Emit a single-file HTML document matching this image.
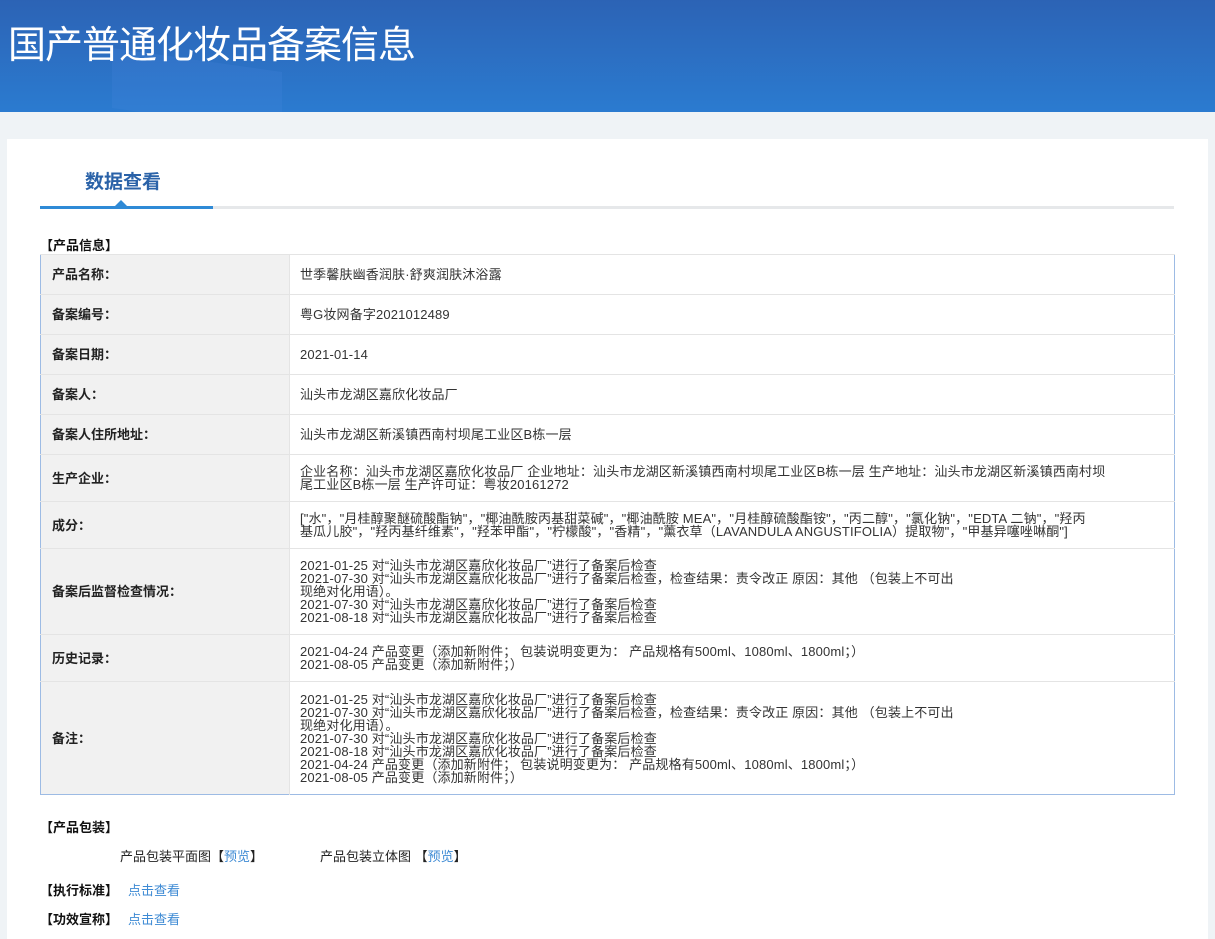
<!DOCTYPE html>
<html><head><meta charset="utf-8"><style>
*{margin:0;padding:0;box-sizing:border-box}
body{width:1215px;height:931px;overflow:hidden;background:#eff3f6;font-family:"Liberation Sans","Noto Sans CJK SC",sans-serif;color:#333;position:relative}
.hdr{position:absolute;left:0;top:0;width:1215px;height:112px;background:linear-gradient(180deg,#2c63b5 0%,#2b7bd0 100%);overflow:hidden}
.hdr .s1{position:absolute;left:112px;top:60px;width:170px;height:60px;background:rgba(80,140,230,.18);transform:skewY(8deg)}
.hdr h1{position:absolute;left:8px;top:14px;font-size:38px;font-weight:normal;color:#fff;letter-spacing:-1px;white-space:nowrap}
.panel{position:absolute;left:7px;top:139px;width:1201px;height:800px;background:#fff}
.tab{position:absolute;left:85px;top:167px;font-size:19px;font-weight:bold;color:#2a62a8}
.line{position:absolute;left:40px;top:206px;width:1134px;height:3px;background:#e6e8ea}
.line b{position:absolute;left:0;top:0;width:173px;height:3px;background:#2f8ad6}
.tri{position:absolute;left:115px;top:200px;width:0;height:0;border-left:6px solid transparent;border-right:6px solid transparent;border-bottom:6px solid #2f8ad6}
.sec{position:absolute;left:40px;font-size:13px;font-weight:bold;color:#111}
table{position:absolute;left:40px;top:254px;width:1135px;border-collapse:collapse;border:1px solid #9dbbe4;font-size:13px}
td{border-top:1px solid #e4e4e4;vertical-align:middle;line-height:13px;color:#333}
td.l{width:249px;background:#f1f1f1;font-weight:bold;padding-left:11px;color:#222;border-right:1px solid #e4e4e4}
td.v{padding-left:10px;padding-right:56px;letter-spacing:0.15px}
a{color:#3d8ad4;text-decoration:none}
.t{position:absolute;font-size:13px;color:#222}
</style></head><body>
<div class="hdr"><div class="s1"></div><h1>国产普通化妆品备案信息</h1></div>
<div class="panel"></div>
<div class="tab">数据查看</div>
<div class="line"><b></b></div>
<div class="tri"></div>
<div class="sec" style="top:235px">【产品信息】</div>
<table>
<tr style="height:40px"><td class="l">产品名称：</td><td class="v">世季馨肤幽香润肤·舒爽润肤沐浴露</td></tr>
<tr style="height:40px"><td class="l">备案编号：</td><td class="v">粤G妆网备字2021012489</td></tr>
<tr style="height:40px"><td class="l">备案日期：</td><td class="v">2021-01-14</td></tr>
<tr style="height:40px"><td class="l">备案人：</td><td class="v">汕头市龙湖区嘉欣化妆品厂</td></tr>
<tr style="height:40px"><td class="l">备案人住所地址：</td><td class="v">汕头市龙湖区新溪镇西南村坝尾工业区B栋一层</td></tr>
<tr style="height:47px"><td class="l">生产企业：</td><td class="v">企业名称：汕头市龙湖区嘉欣化妆品厂 企业地址：汕头市龙湖区新溪镇西南村坝尾工业区B栋一层 生产地址：汕头市龙湖区新溪镇西南村坝<br>尾工业区B栋一层 生产许可证：粤妆20161272</td></tr>
<tr style="height:47px"><td class="l">成分：</td><td class="v">["水"，"月桂醇聚醚硫酸酯钠"，"椰油酰胺丙基甜菜碱"，"椰油酰胺 MEA"，"月桂醇硫酸酯铵"，"丙二醇"，"氯化钠"，"EDTA 二钠"，"羟丙<br>基瓜儿胶"，"羟丙基纤维素"，"羟苯甲酯"，"柠檬酸"，"香精"，"薰衣草（LAVANDULA ANGUSTIFOLIA）提取物"，"甲基异噻唑啉酮"]</td></tr>
<tr style="height:86px"><td class="l">备案后监督检查情况：</td><td class="v">2021-01-25 对“汕头市龙湖区嘉欣化妆品厂”进行了备案后检查<br>2021-07-30 对“汕头市龙湖区嘉欣化妆品厂”进行了备案后检查，检查结果：责令改正 原因：其他 （包装上不可出<br>现绝对化用语）。<br>2021-07-30 对“汕头市龙湖区嘉欣化妆品厂”进行了备案后检查<br>2021-08-18 对“汕头市龙湖区嘉欣化妆品厂”进行了备案后检查</td></tr>
<tr style="height:47px"><td class="l">历史记录：</td><td class="v">2021-04-24 产品变更（添加新附件； 包装说明变更为： 产品规格有500ml、1080ml、1800ml；）<br>2021-08-05 产品变更（添加新附件；）</td></tr>
<tr style="height:113px"><td class="l">备注：</td><td class="v">2021-01-25 对“汕头市龙湖区嘉欣化妆品厂”进行了备案后检查<br>2021-07-30 对“汕头市龙湖区嘉欣化妆品厂”进行了备案后检查，检查结果：责令改正 原因：其他 （包装上不可出<br>现绝对化用语）。<br>2021-07-30 对“汕头市龙湖区嘉欣化妆品厂”进行了备案后检查<br>2021-08-18 对“汕头市龙湖区嘉欣化妆品厂”进行了备案后检查<br>2021-04-24 产品变更（添加新附件； 包装说明变更为： 产品规格有500ml、1080ml、1800ml；）<br>2021-08-05 产品变更（添加新附件；）</td></tr>
</table>
<div class="sec" style="top:817px">【产品包装】</div>
<div class="t" style="left:120px;top:846px">产品包装平面图【<a>预览</a>】</div>
<div class="t" style="left:320px;top:846px">产品包装立体图 【<a>预览</a>】</div>
<div class="sec" style="top:880px">【执行标准】<a style="font-weight:normal;margin-left:10px">点击查看</a></div>
<div class="sec" style="top:909px">【功效宣称】<a style="font-weight:normal;margin-left:10px">点击查看</a></div>
</body></html>
